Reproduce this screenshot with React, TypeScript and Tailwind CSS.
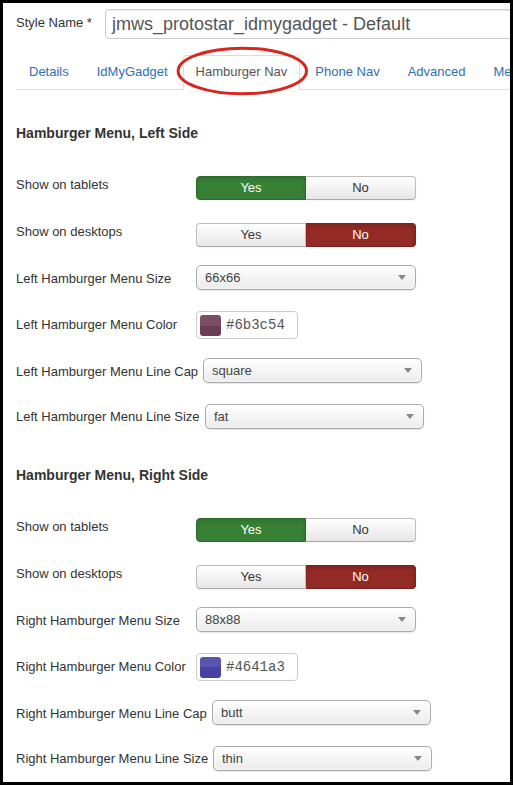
import React from "react";

type Row =
  | { kind: "yesno"; label: string; yes: boolean; mt: string; pt: string; lw: string }
  | { kind: "select"; label: string; value: string; mt: string; pt: string; lw: string; w: string }
  | { kind: "color"; label: string; value: string; mt: string; pt: string; lw: string; swatch: string };

function YesNo({ yes }: { yes: boolean }) {
  const inactive =
    "bg-linear-to-b from-[#ffffff] to-[#e6e6e6] border-[#bdbdbd] border-b-[#a8a8a8] text-[#333] shadow-[inset_0_1px_0_rgba(255,255,255,0.3),0_1px_2px_rgba(0,0,0,0.05)]";
  const green = "bg-[#378137] border-[#2b6b2b] text-white shadow-[inset_0_2px_4px_rgba(0,0,0,0.15)]";
  const red = "bg-[#942a25] border-[#7a221e] text-white shadow-[inset_0_2px_4px_rgba(0,0,0,0.15)]";
  return (
    <div className="flex w-[220px] h-[24px] shrink-0">
      <div className={`w-[110px] h-full border rounded-l-[4px] flex items-center justify-center ${yes ? green : inactive}`}>Yes</div>
      <div className={`w-[110px] h-full border border-l-0 rounded-r-[4px] flex items-center justify-center ${yes ? inactive : red}`}>No</div>
    </div>
  );
}

function Select({ value, w }: { value: string; w: string }) {
  return (
    <div
      className={`${w} h-[25px] shrink-0 border border-[#aaa] rounded-[5px] bg-linear-to-b from-[#ffffff] via-[#f5f5f5] to-[#ebebeb] shadow-[inset_0_0_3px_#fff,0_1px_1px_rgba(0,0,0,0.1)] flex items-center justify-between pl-[8px] pr-[9px] text-[#444]`}
    >
      <span>{value}</span>
      <svg width="8" height="5" viewBox="0 0 8 5">
        <polygon points="0,0 8,0 4,5" fill="#888" />
      </svg>
    </div>
  );
}

function ColorBox({ value, swatch }: { value: string; swatch: string }) {
  return (
    <div className="w-[102px] h-[28px] shrink-0 border border-[#ccc] rounded-[4px] bg-white flex items-center pl-[3px] gap-[5px]">
      <div className={`w-[21px] h-[21px] rounded-[3px] ${swatch}`} />
      <span className="font-['Liberation_Mono',monospace] text-[14px] text-[#555]">{value}</span>
    </div>
  );
}

function Section({ title, rows }: { title: string; rows: Row[] }) {
  return (
    <div>
      <div className="text-[14px] leading-[20px] font-bold text-[#333]">{title}</div>
      {rows.map((r, i) => (
        <div key={i} className={`flex items-start ${r.mt}`}>
          <div className={`${r.lw} ${r.pt} shrink-0 whitespace-nowrap`}>{r.label}</div>
          {r.kind === "yesno" && <YesNo yes={r.yes} />}
          {r.kind === "select" && <Select value={r.value} w={r.w} />}
          {r.kind === "color" && <ColorBox value={r.value} swatch={r.swatch} />}
        </div>
      ))}
    </div>
  );
}

export default function App() {
  const tabs = ["Details", "IdMyGadget", "Hamburger Nav", "Phone Nav", "Advanced", "Menu Assignment"];
  const left: Row[] = [
    { kind: "yesno", label: "Show on tablets", yes: true, mt: "mt-[33px]", pt: "pt-0", lw: "w-[180px]" },
    { kind: "yesno", label: "Show on desktops", yes: false, mt: "mt-[23px]", pt: "pt-0", lw: "w-[180px]" },
    { kind: "select", label: "Left Hamburger Menu Size", value: "66x66", mt: "mt-[18px]", pt: "pt-[5px]", lw: "w-[180px]", w: "w-[220px]" },
    {
      kind: "color",
      label: "Left Hamburger Menu Color",
      value: "#6b3c54",
      mt: "mt-[21px]",
      pt: "pt-[5px]",
      lw: "w-[180px]",
      swatch: "bg-linear-to-b from-[#7b4e66] from-50% to-[#6b3c54] to-50%",
    },
    { kind: "select", label: "Left Hamburger Menu Line Cap", value: "square", mt: "mt-[19px]", pt: "pt-[5px]", lw: "w-[187px]", w: "w-[219px]" },
    { kind: "select", label: "Left Hamburger Menu Line Size", value: "fat", mt: "mt-[21px]", pt: "pt-[4px]", lw: "w-[189px]", w: "w-[219px]" },
  ];
  const right: Row[] = [
    { kind: "yesno", label: "Show on tablets", yes: true, mt: "mt-[33px]", pt: "pt-0", lw: "w-[180px]" },
    { kind: "yesno", label: "Show on desktops", yes: false, mt: "mt-[23px]", pt: "pt-0", lw: "w-[180px]" },
    { kind: "select", label: "Right Hamburger Menu Size", value: "88x88", mt: "mt-[18px]", pt: "pt-[5px]", lw: "w-[180px]", w: "w-[220px]" },
    {
      kind: "color",
      label: "Right Hamburger Menu Color",
      value: "#4641a3",
      mt: "mt-[21px]",
      pt: "pt-[5px]",
      lw: "w-[180px]",
      swatch: "bg-linear-to-b from-[#5854b2] from-50% to-[#4641a3] to-50%",
    },
    { kind: "select", label: "Right Hamburger Menu Line Cap", value: "butt", mt: "mt-[19px]", pt: "pt-[5px]", lw: "w-[196px]", w: "w-[219px]" },
    { kind: "select", label: "Right Hamburger Menu Line Size", value: "thin", mt: "mt-[21px]", pt: "pt-[4px]", lw: "w-[197px]", w: "w-[219px]" },
  ];

  return (
    <div className="relative w-[513px] h-[785px] border-[3px] border-black bg-white overflow-hidden font-['Liberation_Sans',Arial,sans-serif] text-[13px] leading-[18px] text-[#333]">
      <div className="pl-[13px] pt-[6px] w-[620px]">
        {/* Style name */}
        <div className="flex items-start">
          <div className="w-[89px] pt-[5px] shrink-0">Style Name *</div>
          <div className="w-[440px] h-[30px] shrink-0 border border-[#ccc] rounded-[4px] bg-white shadow-[inset_0_1px_1px_rgba(0,0,0,0.075)] flex items-center pl-[6px] text-[18px] text-[#555]">
            jmws_protostar_idmygadget - Default
          </div>
        </div>

        {/* Tabs */}
        <ul className="mt-[16px] flex flex-nowrap border-b border-[#ddd] w-[600px]">
          {tabs.map((t) => {
            const active = t === "Hamburger Nav";
            return (
              <li key={t} className="shrink-0 -mb-px mr-[2px]">
                <div
                  className={`block whitespace-nowrap px-[12px] pt-[7px] pb-[8px] border rounded-t-[4px] leading-[18px] ${
                    active ? "border-[#ddd] border-b-transparent bg-white text-[#555]" : "border-transparent text-[#2f6fb6]"
                  }`}
                >
                  {t}
                </div>
              </li>
            );
          })}
        </ul>

        <div className="mt-[33px]">
          <Section title="Hamburger Menu, Left Side" rows={left} />
        </div>
        <div className="mt-[36px]">
          <Section title="Hamburger Menu, Right Side" rows={right} />
        </div>
      </div>

      {/* red annotation ellipse */}
      <svg className="absolute left-[173px] top-[43px]" width="134" height="52" viewBox="0 0 134 52">
        <ellipse cx="66.3" cy="25" rx="64.2" ry="22.8" fill="none" stroke="#d7261e" strokeWidth="3" />
      </svg>
    </div>
  );
}
